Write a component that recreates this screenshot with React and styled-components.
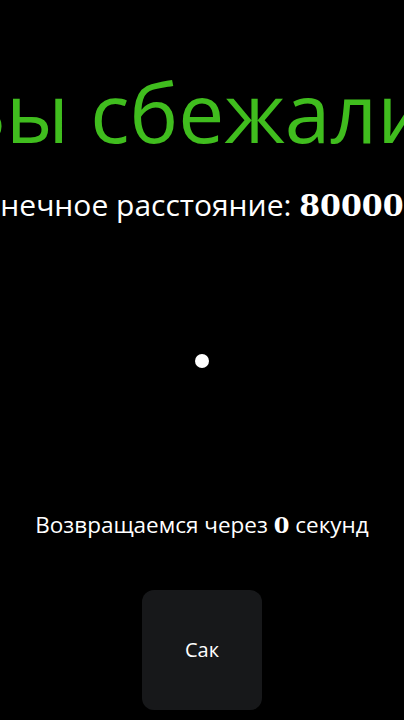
import React from 'react';
import styled, { createGlobalStyle } from 'styled-components';

const Global = createGlobalStyle`
  html, body {
    margin: 0;
    padding: 0;
    background: #000;
    overflow: hidden;
  }
  body {
    font-family: "Open Sans", "Noto Sans", sans-serif;
    color: #fff;
  }
`;

const Screen = styled.div`
  width: 404px;
  height: 720px;
  display: flex;
  flex-direction: column;
  align-items: center;
  overflow: hidden;
`;

const Title = styled.h1`
  margin: 62px 0 0;
  font-size: 82px;
  font-weight: 400;
  line-height: 1.2;
  color: #40bd1e;
  white-space: nowrap;
  text-align: center;
`;

const Distance = styled.div`
  margin-top: 25px;
  font-size: 30px;
  line-height: 1.3;
  white-space: nowrap;
`;

const Num = styled.span`
  font-family: "DejaVu Serif", serif;
  font-weight: 700;
`;

const Dot = styled.div`
  margin-top: 129px;
  width: 14px;
  height: 14px;
  border-radius: 50%;
  background: #fff;
`;

const Countdown = styled.div`
  margin-top: 142px;
  font-size: 22.5px;
  line-height: 1.3;
  white-space: nowrap;
`;

const Button = styled.button`
  margin-top: 49px;
  width: 120px;
  height: 120px;
  border: none;
  border-radius: 12px;
  background: #17181a;
  color: #fff;
  font-family: "Open Sans", sans-serif;
  font-size: 20px;
`;

export default function App() {
  return (
    <Screen>
      <Global />
      <Title>Вы сбежали!</Title>
      <Distance>Конечное расстояние: <Num>80000 м</Num></Distance>
      <Dot />
      <Countdown>Возвращаемся через <Num>0</Num> секунд</Countdown>
      <Button>Сак</Button>
    </Screen>
  );
}
